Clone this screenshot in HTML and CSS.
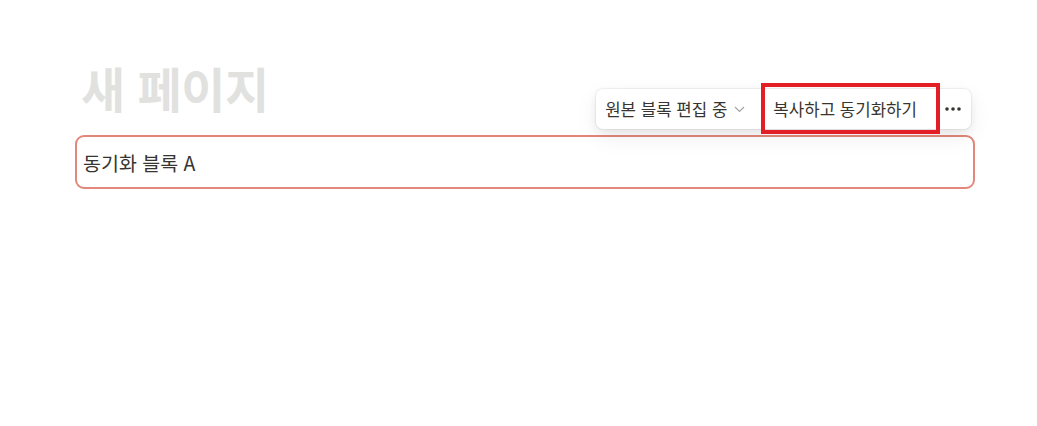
FILE: index.html
```html
<!DOCTYPE html>
<html lang="ko">
<head>
<meta charset="utf-8">
<title>새 페이지</title>
<link rel="stylesheet" href="styles.css">
</head>
<body>
<div class="page">
  <h1 class="title">새 페이지</h1>
  <div class="block-wrap">
    <div class="toolbar">
      <div class="tb-btn tb-source">원본 블록 편집 중
        <svg class="chev" width="11" height="7" viewBox="0 0 11 7"><path d="M1 1l4.5 4.5L10 1" fill="none" stroke="#a5a4a0" stroke-width="1.2"/></svg>
      </div>
      <div class="tb-btn tb-copy">복사하고 동기화하기<span class="highlight"></span></div>
      <div class="tb-btn tb-more">
        <svg width="16" height="4" viewBox="0 0 16 4"><circle cx="2" cy="2" r="1.8" fill="#37352f"/><circle cx="8" cy="2" r="1.8" fill="#37352f"/><circle cx="14" cy="2" r="1.8" fill="#37352f"/></svg>
      </div>
    </div>
    <div class="sync-block">동기화 블록 A</div>
  </div>
</div>
</body>
</html>
```
FILE: styles.css
```css
html, body {
  margin: 0;
  padding: 0;
  background: #ffffff;
}
body {
  font-family: "Noto Sans CJK KR", "Noto Sans", sans-serif;
  color: #37352f;
}
.page {
  width: 900px;
  padding: 54px 0 0 75px;
}
.title {
  margin: 0;
  padding-left: 6px;
  font-size: 48px;
  line-height: 66px;
  font-weight: 700;
  color: #e1e1e0;
  letter-spacing: -0.5px;
}
.block-wrap {
  position: relative;
  margin-top: 15px;
}
.sync-block {
  height: 54px;
  box-sizing: border-box;
  border: 2px solid #e3877a;
  border-radius: 9px;
  padding: 0 6px;
  display: flex;
  align-items: center;
  font-size: 19.5px;
}
.toolbar {
  position: absolute;
  top: -46px;
  right: 4px;
  height: 40px;
  display: flex;
  align-items: center;
  background: #ffffff;
  border-radius: 7px;
  box-shadow: 0 0 0 1px rgba(15, 15, 15, 0.05), 0 3px 8px rgba(15, 15, 15, 0.06), 0 8px 22px rgba(15, 15, 15, 0.07);
  font-size: 16.8px;
  z-index: 2;
}
.tb-btn {
  height: 100%;
  display: flex;
  align-items: center;
  white-space: nowrap;
}
.tb-source {
  padding: 0 20px 0 9px;
  gap: 7px;
}
.chev {
  margin-top: 1px;
}
.tb-copy {
  position: relative;
  padding: 0 18px 0 8px;
}
.tb-more {
  padding: 0 10px 0 10px;
}
.highlight {
  position: absolute;
  left: -4.5px;
  right: -4.5px;
  top: -6px;
  bottom: -5px;
  border: 4.5px solid #e31e24;
  pointer-events: none;
}
```
